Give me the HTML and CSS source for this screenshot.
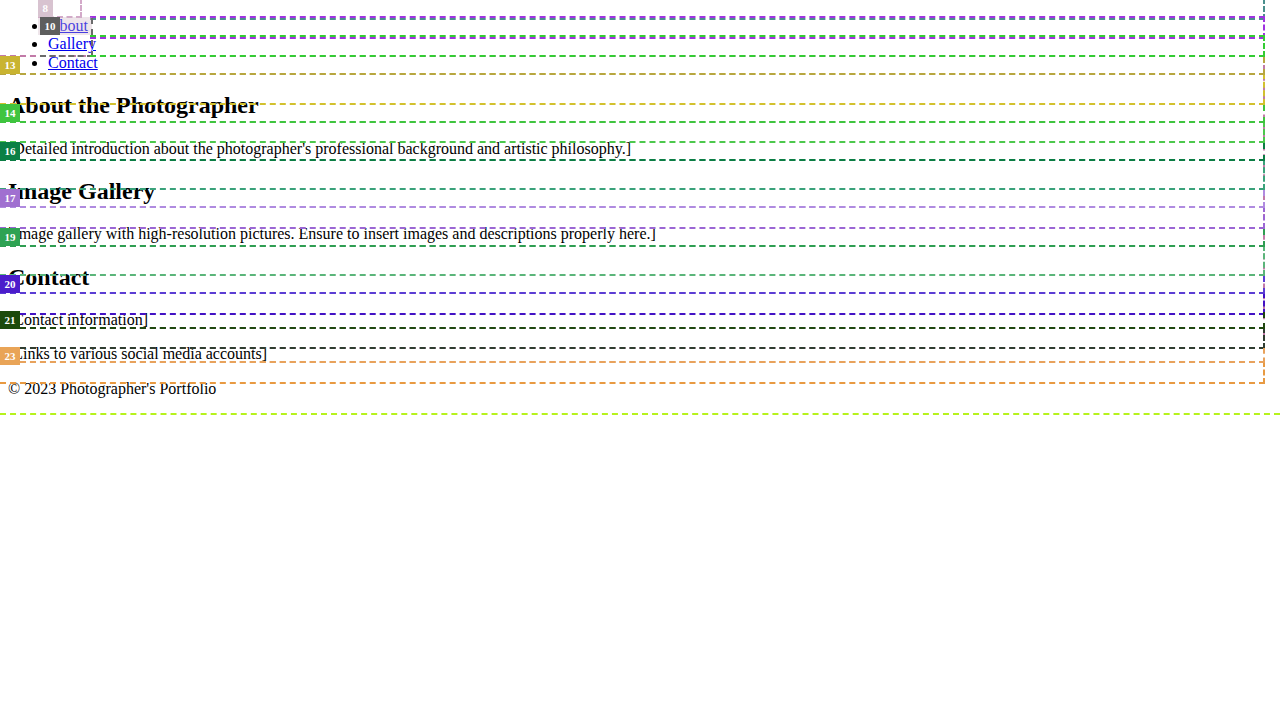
FILE: index.html
```html
<!DOCTYPE html>
<html lang="en">
<head>
<meta charset="utf-8">
<title>Photographer's Portfolio</title>
<link rel="stylesheet" href="styles.css">
</head>
<body>
<header class="site-header">
  <nav class="site-nav">
    <ul class="nav-list">
      <li><a href="#about">About</a></li>
      <li><a href="#gallery">Gallery</a></li>
      <li><a href="#contact">Contact</a></li>
    </ul>
  </nav>
</header>
<main class="site-main">
  <section id="about" class="section">
    <h2 class="section-title">About the Photographer</h2>
    <p class="section-text">[Detailed introduction about the photographer's professional background and artistic philosophy.]</p>
  </section>
  <section id="gallery" class="section">
    <h2 class="section-title">Image Gallery</h2>
    <p class="section-text">[Image gallery with high-resolution pictures. Ensure to insert images and descriptions properly here.]</p>
  </section>
  <section id="contact" class="section">
    <h2 class="section-title">Contact</h2>
    <p class="section-text">[Contact information]</p>
    <p class="section-text">[Links to various social media accounts]</p>
  </section>
</main>
<footer class="site-footer">
  <p class="footer-text">&copy; 2023 Photographer's Portfolio</p>
</footer>

<div class="debug-overlay" aria-hidden="true">
  <div class="dbg o-mauve"></div>
  <div class="dbg o-teal"></div>
  <div class="dbg o8"><span class="tag tag8">8</span></div>
  <div class="dbg o-purple"></div>
  <div class="fill-about"></div>
  <div class="dbg o10"><span class="tag tag10">10</span></div>
  <div class="dbg o-green1"></div>
  <div class="dbg o-yellow"></div>
  <div class="dbg o-green2"></div>
  <div class="dbg o-tealgreen"></div>
  <div class="dbg o-ltpurple"></div>
  <div class="dbg o-ltgreen"></div>
  <div class="dbg o-indigo"></div>
  <div class="dbg o-dark"></div>
  <div class="dbg o-orange"></div>
  <div class="dbg lab o13"><span class="tag tag13">13</span></div>
  <div class="dbg lab o14"><span class="tag tag14">14</span></div>
  <div class="dbg lab o16"><span class="tag tag16">16</span></div>
  <div class="dbg lab o17"><span class="tag tag17">17</span></div>
  <div class="dbg lab o19"><span class="tag tag19">19</span></div>
  <div class="dbg lab o20"><span class="tag tag20">20</span></div>
  <div class="dbg lab o21"><span class="tag tag21">21</span></div>
  <div class="dbg lab o23"><span class="tag tag23">23</span></div>
  <div class="dbg-line o-lime"></div>
</div>
</body>
</html>
```
FILE: styles.css
```css
html {
  background: #ffffff;
}

body {
  margin: 8px;
  font-family: "Liberation Serif", "Times New Roman", serif;
  font-size: 16px;
  line-height: 1.149;
  color: #000000;
}

.site-header {
  display: flow-root;
}

.nav-list {
  margin: 9px 0 0;
  padding-left: 40px;
  list-style: disc;
}

.nav-list a {
  color: #0000ee;
  text-decoration: underline;
}

.section-title {
  font-size: 24px;
  font-weight: bold;
  margin: 19.92px 0;
}

.section-text,
.footer-text {
  margin: 16px 0;
}

/* ---------- debug overlay ---------- */
.debug-overlay {
  position: absolute;
  top: 0;
  left: 0;
  width: 1280px;
  height: 720px;
  overflow: hidden;
  pointer-events: none;
}

.dbg {
  position: absolute;
  left: 0;
  width: 1265px;
  box-sizing: border-box;
  border: 2px dashed;
  border-left: 0;
}

.dbg.lab {
  border-top: 0;
}

.dbg-line {
  position: absolute;
  left: 0;
  width: 1280px;
  height: 0;
  border-top: 2px dashed;
}

.tag {
  position: absolute;
  left: 0;
  top: -1px;
  height: 18px;
  padding: 0 4.5px;
  font: bold 11px/19px "Liberation Serif", serif;
  color: #ffffff;
}

.fill-about {
  position: absolute;
  left: 38px;
  top: 17px;
  width: 54px;
  height: 18px;
  background: rgba(205, 180, 195, 0.35);
}

.o-mauve { top: 55px; height: 294px; border-color: #c27aa8; }
.o-teal { top: -10px; height: 30px; left: 90px; width: 1175px; border-color: #4b8f8c; }
.o8 { top: -2px; height: 20px; left: 38px; width: 44px; border-color: #d3a9c9; }
.o-purple { top: 16px; height: 23px; left: 90px; width: 1175px; border-color: #a032e0; }
.o10 { top: 18px; height: 39px; left: 40px; width: 53px; border-color: #6b6b6b; border-top: 0; }
.o-green1 { top: 35px; height: 22px; left: 90px; width: 1175px; border-color: #33cc33; }
.o-yellow { top: 73px; height: 32px; border-color: #d2c12e; }
.o-green2 { top: 121px; height: 22px; border-color: #4cc84c; }
.o-tealgreen { top: 159px; height: 31px; border-color: #3aa27a; }
.o-ltpurple { top: 206px; height: 23px; border-color: #9b66d4; }
.o-ltgreen { top: 245px; height: 31px; border-color: #5bb57a; }
.o-indigo { top: 292px; height: 23px; border-color: #4312c4; }
.o-dark { top: 327px; height: 22px; border-color: #2f3c30; }
.o-orange { top: 361px; height: 23px; border-color: #e89a42; }
.o-lime { top: 413px; border-color: #b6f21c; }

.o13 { top: 57px; height: 18px; border-color: #b7a640; }
.o14 { top: 105px; height: 18px; border-color: #3fc43f; }
.o16 { top: 143px; height: 18px; border-color: #0b7d44; }
.o17 { top: 190px; height: 18px; border-color: #b08be0; }
.o19 { top: 229px; height: 18px; border-color: #2f9e52; }
.o20 { top: 276px; height: 18px; border-color: #5b3dd4; }
.o21 { top: 312px; height: 17px; border-color: #1f470f; }
.o23 { top: 348px; height: 15px; border-color: #e8a25c; }

.tag8 { background: #d8c3d0; }
.tag10 { background: #5e5e5e; }
.tag13 { background: #c9b431; }
.tag14 { background: #3fc43f; }
.tag16 { background: #0a8045; }
.tag17 { background: #a070d0; }
.tag19 { background: #2ea253; }
.tag20 { background: #4b1ccb; }
.tag21 { background: #1b4a0b; }
.tag23 { background: #e9a457; }
```
